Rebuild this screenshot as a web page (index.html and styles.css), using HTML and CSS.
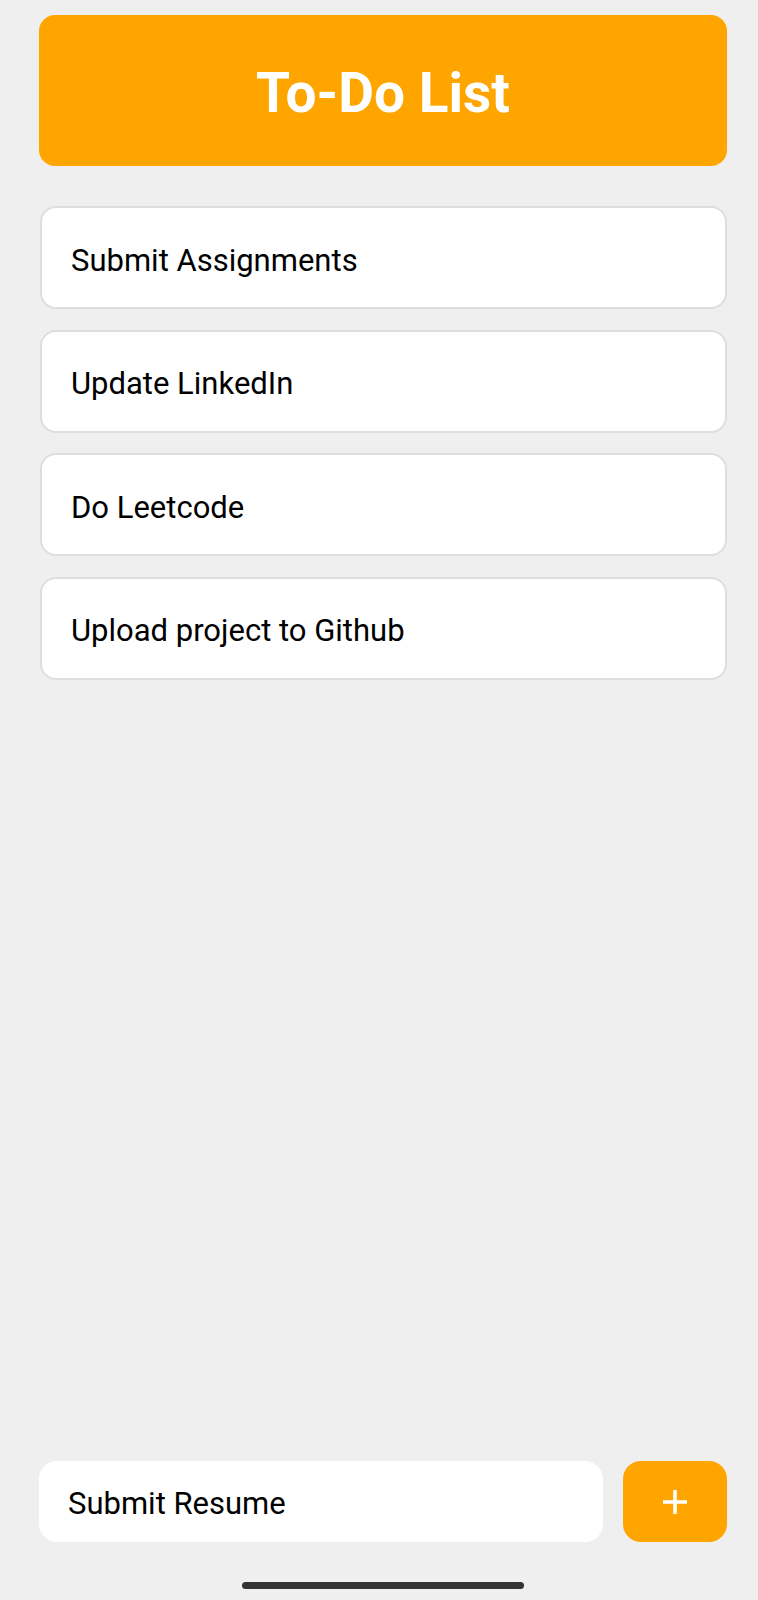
FILE: index.html
```html
<!DOCTYPE html>
<html lang="en">
<head>
<meta charset="utf-8">
<title>To-Do List</title>
<link rel="stylesheet" href="styles.css">
</head>
<body>
<div class="screen">
  <header class="title-bar">
    <h1 class="title">To-Do List</h1>
  </header>
  <ul class="task-list">
    <li class="task">Submit Assignments</li>
    <li class="task">Update LinkedIn</li>
    <li class="task">Do Leetcode</li>
    <li class="task">Upload project to Github</li>
  </ul>
  <div class="composer">
    <div class="task-input">Submit Resume</div>
    <button class="add-btn" aria-label="Add">
      <svg width="26" height="26" viewBox="0 0 26 26" aria-hidden="true">
        <path d="M13 1v24M1 13h24" stroke="#fff" stroke-width="3.6" stroke-linecap="butt" fill="none"/>
      </svg>
    </button>
  </div>
  <div class="home-bar"><div class="home-indicator"></div></div>
</div>
</body>
</html>
```

FILE: styles.css
```css
* { box-sizing: border-box; }
html, body {
  margin: 0;
  padding: 0;
  background: #efefef;
}
body {
  font-family: Roboto, "Liberation Sans", sans-serif;
  color: #000;
}
.screen {
  height: 1600px;
  display: flex;
  flex-direction: column;
  padding: 15px 31px 0 39px;
}
.title-bar {
  height: 151px;
  background: #ffa500;
  border-radius: 16px;
  display: flex;
  align-items: center;
  justify-content: center;
  flex: none;
}
.title {
  margin: 0;
  color: #fff;
  font-size: 55px;
  font-weight: 700;
  line-height: 1;
  padding-top: 5px;
}
.task-list {
  list-style: none;
  margin: 40px 0 0 1px;
  padding: 0;
  display: flex;
  flex-direction: column;
  gap: 20.5px;
  flex: none;
}
.task {
  height: 103px;
  background: #fff;
  border: 2px solid #dedede;
  border-radius: 16px;
  display: flex;
  align-items: center;
  padding: 5px 0 0 29px;
  font-size: 31px;
}
.composer {
  margin-top: auto;
  display: flex;
  gap: 20px;
  height: 81px;
  flex: none;
}
.task-input {
  flex: 1;
  background: #fff;
  border-radius: 18px;
  display: flex;
  align-items: center;
  padding: 4px 0 0 29px;
  font-size: 31px;
}
.add-btn {
  width: 104px;
  flex: none;
  border: 0;
  background: #ffa500;
  border-radius: 18px;
  display: flex;
  align-items: center;
  justify-content: center;
  padding: 0;
}
.add-btn svg { display: block; }
.home-bar {
  height: 58px;
  flex: none;
  display: block;
}
.home-indicator {
  width: 282px;
  height: 7px;
  border-radius: 4px;
  background: #333;
  margin: 40px 0 0 203px;
}
```
